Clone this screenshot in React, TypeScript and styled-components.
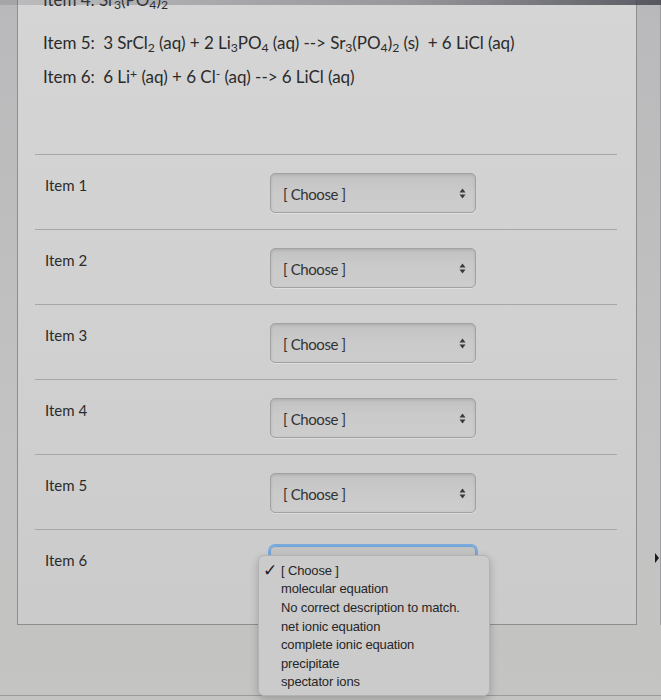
import styled, { createGlobalStyle } from 'styled-components';

const GlobalStyle = createGlobalStyle`
	html, body {
		margin: 0;
		padding: 0;
		background: #bdbdbe;
	}
	body {
		font-family: Lato, 'Open Sans', sans-serif;
		color: #2b2b2b;
	}
`;

const items = ['Item 1', 'Item 2', 'Item 3', 'Item 4', 'Item 5', 'Item 6'];

const options = [
	'[ Choose ]',
	'molecular equation',
	'No correct description to match.',
	'net ionic equation',
	'complete ionic equation',
	'precipitate',
	'spectator ions',
];

const ArrowsIcon = () => (
	<svg width="7" height="11" viewBox="0 0 7 11">
		<path d="M0.5 4.5 L3.5 0.5 L6.5 4.5 Z" fill="#3a3a3a" />
		<path d="M0.5 6.5 L6.5 6.5 L3.5 10.5 Z" fill="#3a3a3a" />
	</svg>
);

const App = () => {
	return (
		<>
			<GlobalStyle />
			<Screen>
				<TopShade />
				<Main>
					<Panel>
						<Equations>
							<EqLine $gap={9}>
								Item 4: Sr<sub>3</sub>(PO<sub>4</sub>)<sub>2</sub>
							</EqLine>
							<EqLine>
								Item 5:&nbsp; 3 SrCl<sub>2</sub> (aq) + 2 Li<sub>3</sub>PO<sub>4</sub> (aq) --&gt; Sr
								<sub>3</sub>(PO<sub>4</sub>)<sub>2</sub> (s)&nbsp; + 6 LiCl (aq)
							</EqLine>
							<EqLine>
								Item 6:&nbsp; 6 Li<sup>+</sup> (aq) + 6 Cl<sup>-</sup> (aq) --&gt; 6 LiCl (aq)
							</EqLine>
						</Equations>

						<Table>
							{items.map((label, i) => {
								const open = i === items.length - 1;
								return (
									<Row key={label} $last={open}>
										<Label>{label}</Label>
										<SelectWrap>
											<SelectBox $focused={open}>
												<span>[ Choose ]</span>
												<ArrowsIcon />
											</SelectBox>
											{open && (
												<Menu>
													{options.map((opt, j) => (
														<Option key={opt}>
															<Check>{j === 0 ? '✓' : ''}</Check>
															{opt}
														</Option>
													))}
												</Menu>
											)}
										</SelectWrap>
									</Row>
								);
							})}
						</Table>
					</Panel>
					<RightEdge>
						<Pointer />
					</RightEdge>
				</Main>
				<Footer />
			</Screen>
		</>
	);
};

export default App;

const Screen = styled.div`
	height: 700px;
	overflow: hidden;
	display: flex;
	flex-direction: column;
	background: linear-gradient(180deg, #b9b9bb 0%, #c2c2c2 60%, #c4c4c3 100%);
`;

const TopShade = styled.div`
	position: fixed;
	top: 0;
	left: 0;
	width: 100%;
	height: 5px;
	background: linear-gradient(90deg, rgba(90, 90, 98, 0.2) 0%, rgba(80, 80, 90, 0.45) 60%, rgba(70, 70, 80, 0.85) 100%);
	z-index: 5;
`;

const Main = styled.div`
	display: flex;
	padding-left: 17px;
`;

const Panel = styled.div`
	width: 620px;
	margin-top: -17px;
	border: 1px solid #8e8e8e;
	border-top: none;
	background: linear-gradient(180deg, #d5d5d5 0%, #d1d1d1 50%, #cbcbcb 100%);
	padding: 0 19px 38px 17px;
	box-sizing: border-box;
`;

const Equations = styled.div`
	padding-left: 8px;
`;

const EqLine = styled.div<{ $gap?: number }>`
	height: 34px;
	line-height: 34px;
	font-size: 17px;
	letter-spacing: -0.05px;
	white-space: nowrap;
	margin-bottom: ${(p) => p.$gap ?? 0}px;
	sub,
	sup {
		font-size: 0.72em;
		line-height: 0;
	}
	sub {
		vertical-align: -0.25em;
	}
	sup {
		vertical-align: 0.45em;
	}
`;

const Table = styled.div`
	margin-top: 60px;
`;

const Row = styled.div<{ $last?: boolean }>`
	display: grid;
	grid-template-columns: 225px 206px;
	align-items: start;
	border-top: 1px solid #a7a7a7;
	padding: 18px 0 ${(p) => (p.$last ? 0 : 16)}px 10px;
`;

const Label = styled.div`
	font-size: 15px;
	line-height: 18px;
	margin-top: 3px;
`;

const SelectWrap = styled.div`
	position: relative;
`;

const SelectBox = styled.div<{ $focused?: boolean }>`
	height: 40px;
	box-sizing: border-box;
	display: flex;
	align-items: center;
	justify-content: space-between;
	padding: 0 9px 0 12px;
	margin-top: ${(p) => (p.$focused ? -2 : 0)}px;
	border-radius: 5px;
	border: 1px solid ${(p) => (p.$focused ? '#6fa2d6' : '#a2a2a2')};
	box-shadow: ${(p) =>
		p.$focused ? '0 0 0 2px #7aaadb' : 'inset 0 1px 3px rgba(0, 0, 0, 0.12), 0 1px 0 rgba(255, 255, 255, 0.3)'};
	background: linear-gradient(180deg, #c2c2c2 0%, #cacaca 45%, #cdcdcd 100%);
	font-size: 15px;
	letter-spacing: -0.4px;
	color: #333;
	span {
		margin-top: 2px;
	}
`;

const Menu = styled.div`
	position: absolute;
	left: -12px;
	top: 7px;
	width: 232px;
	box-sizing: border-box;
	padding: 5px 0 4px;
	background: #cbcbcb;
	border: 1px solid #b3b3b3;
	border-radius: 6px;
	box-shadow: 0 3px 8px rgba(0, 0, 0, 0.22);
	z-index: 3;
`;

const Option = styled.div`
	display: flex;
	align-items: center;
	height: 18.6px;
	font-family: 'Liberation Sans', Arial, sans-serif;
	font-size: 13px;
	letter-spacing: -0.15px;
	color: #262626;
	white-space: nowrap;
`;

const Check = styled.span`
	width: 22px;
	padding-left: 4px;
	box-sizing: border-box;
	font-family: 'DejaVu Sans', sans-serif;
	font-size: 17px;
	font-weight: bold;
	color: #1e1e1e;
`;

const RightEdge = styled.div`
	flex: 1;
	display: flex;
	flex-direction: column;
	align-items: flex-end;
	border-right: 1px solid #9d9d9f;
`;

const Pointer = styled.div`
	margin-top: 553px;
	margin-right: 1px;
	width: 0;
	height: 0;
	border-top: 5px solid transparent;
	border-bottom: 5px solid transparent;
	border-left: 4px solid #1a1a1a;
`;

const Footer = styled.div`
	height: 70px;
	flex-shrink: 0;
	border-bottom: 1px solid #9a9a9a;
`;
